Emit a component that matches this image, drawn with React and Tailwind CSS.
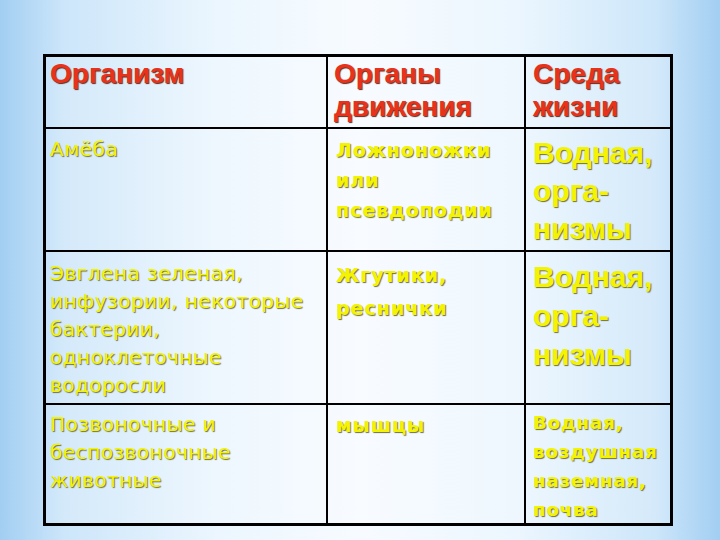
import React from 'react';

const font = { fontFamily: '"Liberation Sans", Arial, sans-serif' };
const wide = '[font-family:"DejaVu_Sans",Verdana,sans-serif]';

// text styles
const headCls = 'text-[28px] leading-[33px] font-bold text-[#e8321c] [text-shadow:1px_1px_1px_#5a2a1e]';
const bodyCls = wide + ' text-[20px] leading-[28px] tracking-[0.5px] text-[#f4f400] [text-shadow:1px_1px_1px_#6e6e40]';
const boldCls = wide + ' text-[19px] leading-[30px] tracking-[1px] font-bold text-[#f4f400] [text-shadow:1px_1px_1px_#6e6e40]';
const bigCls = 'text-[30px] leading-[38px] font-bold text-[#f4f400] [text-shadow:1px_1px_1px_#6e6e40]';
const smallCls = wide + ' text-[18px] leading-[29px] tracking-[1px] font-bold text-[#f4f400] [text-shadow:1px_1px_1px_#6e6e40]';

function Lines({ lines, className }) {
  return (
    <div className={className}>
      {lines.map((l, i) => (
        <div key={i} className="whitespace-nowrap">{l}</div>
      ))}
    </div>
  );
}

const c1 = 'border-r-2 border-b-2 border-black pl-[4px]';
const c2 = 'border-r-2 border-b-2 border-black pl-[6px]';
const c3 = 'border-b-2 border-black pl-[7px]';

export default function App() {
  return (
    <div
      className="w-[720px] h-[540px] overflow-hidden pt-[54px] pl-[43px] bg-[linear-gradient(90deg,#a2cef2_0%,#cde6fa_9%,#ebf6fe_30%,#f7fbff_50%,#ebf6fe_72%,#cde6fa_91%,#a2cef2_100%)]"
      style={font}
    >
      <div className="w-[630px] h-[472px] border-[3px] border-black grid grid-cols-[282px_198px_144px] grid-rows-[72px_123px_153px_118px] bg-white/15">
        {/* header */}
        <div className={c1}>
          <Lines className={headCls} lines={['Организм']} />
        </div>
        <div className={c2}>
          <Lines className={headCls} lines={['Органы', 'движения']} />
        </div>
        <div className={c3}>
          <Lines className={headCls} lines={['Среда', 'жизни']} />
        </div>

        {/* row 2 */}
        <div className={c1 + ' pt-[6px]'}>
          <Lines className={bodyCls} lines={['Амёба']} />
        </div>
        <div className={c2 + ' pt-[6px] !pl-[8px]'}>
          <Lines className={boldCls} lines={['Ложноножки', 'или', 'псевдоподии']} />
        </div>
        <div className={c3 + ' pt-[5px]'}>
          <Lines className={bigCls} lines={['Водная,', 'орга-', 'низмы']} />
        </div>

        {/* row 3 */}
        <div className={c1 + ' pt-[7px]'}>
          <Lines
            className={bodyCls}
            lines={['Эвглена зеленая,', 'инфузории, некоторые', 'бактерии,', 'одноклеточные', 'водоросли']}
          />
        </div>
        <div className={c2 + ' pt-[7px] !pl-[8px]'}>
          <Lines className={boldCls + ' !leading-[33px]'} lines={['Жгутики,', 'реснички']} />
        </div>
        <div className={c3 + ' pt-[5px]'}>
          <Lines className={bigCls + ' !leading-[39px]'} lines={['Водная,', 'орга-', 'низмы']} />
        </div>

        {/* row 4 */}
        <div className="border-r-2 border-black pl-[4px] pt-[5px]">
          <Lines className={bodyCls} lines={['Позвоночные и', 'беспозвоночные', 'животные']} />
        </div>
        <div className="border-r-2 border-black pl-[8px] pt-[5px]">
          <Lines className={boldCls} lines={['мышцы']} />
        </div>
        <div className="pl-[7px] pt-[3px]">
          <Lines className={smallCls} lines={['Водная,', 'воздушная', 'наземная,', 'почва']} />
        </div>
      </div>
    </div>
  );
}
